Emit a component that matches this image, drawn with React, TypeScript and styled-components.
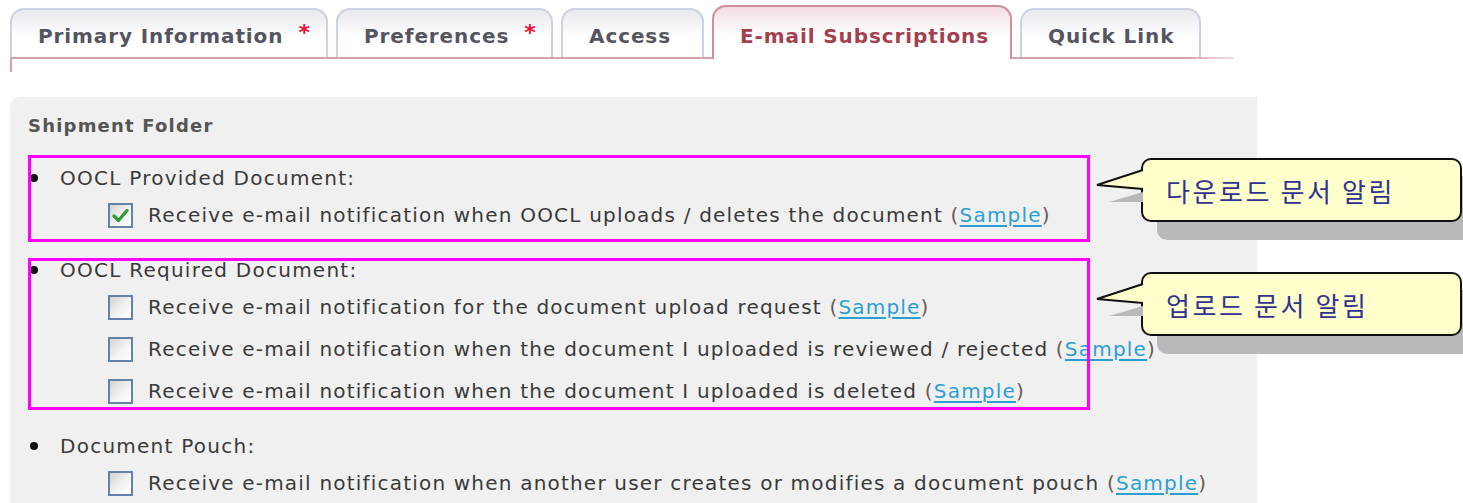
import styled, { createGlobalStyle } from 'styled-components';

interface TabItem {
  label: string;
  width: number;
  required?: boolean;
  active?: boolean;
}

interface RowItem {
  text: string;
  checked?: boolean;
}

interface GroupItem {
  title: string;
  rows: RowItem[];
}

const tabs: TabItem[] = [
  { label: 'Primary Information', width: 318, required: true },
  { label: 'Preferences', width: 217, required: true },
  { label: 'Access', width: 143 },
  { label: 'E-mail Subscriptions', width: 300, active: true },
  { label: 'Quick Link', width: 181 },
];

const groups: GroupItem[] = [
  {
    title: 'OOCL Provided Document:',
    rows: [
      {
        text: 'Receive e-mail notification when OOCL uploads / deletes the document',
        checked: true,
      },
    ],
  },
  {
    title: 'OOCL Required Document:',
    rows: [
      { text: 'Receive e-mail notification for the document upload request' },
      {
        text: 'Receive e-mail notification when the document I uploaded is reviewed / rejected',
      },
      { text: 'Receive e-mail notification when the document I uploaded is deleted' },
    ],
  },
  {
    title: 'Document Pouch:',
    rows: [
      {
        text: 'Receive e-mail notification when another user creates or modifies a document pouch',
      },
    ],
  },
];

const GlobalStyle = createGlobalStyle`
  html, body {
    margin: 0;
    padding: 0;
    background: #ffffff;
    overflow: hidden;
  }
`;

const Page = styled.div`
  position: relative;
  width: 1463px;
  height: 503px;
  padding: 5px 0 0 10px;
  box-sizing: border-box;
  font-family: 'DejaVu Sans', Verdana, sans-serif;
`;

const TabBar = styled.div`
  display: flex;
  align-items: flex-end;
  gap: 8px;
  width: 1224px;
  height: 52px;
  border-bottom: 2px solid;
  border-image: linear-gradient(to right, #d3a3aa 0%, #d3a3aa 96%, #f2e4e6 100%) 1;
`;

const Tab = styled.div<{ $active?: boolean; $width: number }>`
  position: relative;
  box-sizing: border-box;
  width: ${(p) => p.$width}px;
  height: ${(p) => (p.$active ? 54 : 49)}px;
  margin-bottom: ${(p) => (p.$active ? -2 : 0)}px;
  display: flex;
  align-items: center;
  padding: ${(p) => (p.$active ? 6 : 4)}px 0 0 26px;
  border: 2px solid ${(p) => (p.$active ? '#cf8f98' : '#cdd2e2')};
  border-bottom: ${(p) => (p.$active ? 'none' : '0')};
  border-radius: 14px 14px 0 0;
  background: ${(p) =>
    p.$active
      ? 'linear-gradient(to bottom, #f4dde1 0%, #ffffff 55%)'
      : 'linear-gradient(to bottom, #e9e9ee 0%, #ffffff 60%)'};
  color: ${(p) => (p.$active ? '#a3404f' : '#555562')};
  font-weight: bold;
  font-size: 20px;
  letter-spacing: 0.9px;
  white-space: nowrap;
`;

const Required = styled.span`
  color: #ee1133;
  font-size: 22px;
  margin-left: 15px;
  align-self: flex-start;
  margin-top: 8px;
  line-height: 1;
`;

const TabFrame = styled.div`
  width: 0;
  height: 13px;
  border-left: 2px solid #d3a3aa;
`;

const Panel = styled.div`
  position: relative;
  width: 1247px;
  height: 430px;
  margin-top: 25px;
  box-sizing: border-box;
  padding: 17px 0 0 18px;
  background: #f0f0f0;
  border-top-left-radius: 10px;
  color: #3a3a3a;
`;

const Heading = styled.div`
  height: 24px;
  line-height: 24px;
  font-size: 18px;
  font-weight: bold;
  letter-spacing: 1.2px;
  color: #555555;
`;

const GroupList = styled.ul`
  list-style: none;
  margin: 24px 0 0;
  padding: 0;
  display: flex;
  flex-direction: column;
  gap: 18px;
`;

const Group = styled.li`
  display: flex;
  flex-direction: column;
`;

const GroupTitle = styled.div`
  position: relative;
  height: 32px;
  line-height: 32px;
  padding-left: 32px;
  font-size: 20px;
  letter-spacing: 1.25px;

  &::before {
    content: '';
    position: absolute;
    left: 2px;
    top: 12px;
    width: 8px;
    height: 8px;
    border-radius: 50%;
    background: #111111;
  }
`;

const Row = styled.label`
  display: flex;
  align-items: center;
  gap: 15px;
  height: 42px;
  padding-left: 80px;
  font-size: 20px;
  letter-spacing: 1.2px;
  white-space: nowrap;
`;

const Box = styled.span`
  box-sizing: border-box;
  width: 25px;
  height: 25px;
  flex: none;
  display: flex;
  align-items: center;
  justify-content: center;
  border: 2px solid #6583a8;
  background: linear-gradient(135deg, #d4d4d4 0%, #f2f2f2 55%, #ffffff 100%);
`;

const SampleLink = styled.a`
  color: #2c9fd2;
  text-decoration: underline;
  text-underline-offset: 3px;
`;

const Paren = styled.span`
  color: #6b5a55;
`;

const Marker = styled.div<{ $top: number; $height: number }>`
  position: absolute;
  left: 18px;
  top: ${(p) => p.$top}px;
  width: 1062px;
  height: ${(p) => p.$height}px;
  box-sizing: border-box;
  border: 3px solid #ff00ff;
  pointer-events: none;
`;

const Callout = styled.div<{ $top: number }>`
  position: absolute;
  left: 1131px;
  top: ${(p) => p.$top}px;
  width: 321px;
  height: 64px;
  box-sizing: border-box;
  padding-left: 23px;
  display: flex;
  align-items: center;
  background: #ffffcc;
  border: 2px solid #111111;
  border-radius: 10px;
  box-shadow: 16px 18px 0 #b9b9b9;
  color: #30338f;
  font-family: 'Noto Sans CJK KR', 'Noto Sans', sans-serif;
  font-size: 26px;
  letter-spacing: 2.6px;
  z-index: 2;
`;

const Tail = styled.svg`
  position: absolute;
  left: -48px;
  top: 6px;
  overflow: visible;
`;

const CheckMark = () => (
  <svg width="17" height="15" viewBox="0 0 17 15">
    <path
      d="M2 8 L6.5 12.5 L15 2.5"
      fill="none"
      stroke="#2f9a36"
      strokeWidth="3.2"
      strokeLinecap="round"
      strokeLinejoin="round"
    />
  </svg>
);

// speech-bubble pointer plus its drop shadow, drawn left of the bubble
const BubbleTail = () => (
  <Tail width="52" height="40" viewBox="0 0 52 40">
    <polygon points="14,36 48,26 48,36" fill="#b9b9b9" />
    <polygon points="48,4 2,19 48,23 52,23 52,4" fill="#ffffcc" />
    <polyline
      points="48,4 2,19 48,23"
      fill="none"
      stroke="#111111"
      strokeWidth="2"
      strokeLinejoin="miter"
    />
  </Tail>
);

export default function App() {
  return (
    <>
      <GlobalStyle />
      <Page>
        <TabBar>
          {tabs.map((tab) => (
            <Tab key={tab.label} $active={tab.active} $width={tab.width}>
              {tab.label}
              {tab.required && <Required>*</Required>}
            </Tab>
          ))}
        </TabBar>
        <TabFrame />
        <Panel>
          <Heading>Shipment Folder</Heading>
          <GroupList>
            {groups.map((group) => (
              <Group key={group.title}>
                <GroupTitle>{group.title}</GroupTitle>
                {group.rows.map((row) => (
                  <Row key={row.text}>
                    <Box>{row.checked && <CheckMark />}</Box>
                    <span>
                      {row.text} <Paren>(</Paren>
                      <SampleLink href="#">Sample</SampleLink>
                      <Paren>)</Paren>
                    </span>
                  </Row>
                ))}
              </Group>
            ))}
          </GroupList>

          <Marker $top={58} $height={87} />
          <Marker $top={161} $height={152} />

          <Callout $top={61}>
            <BubbleTail />
            다운로드 문서 알림
          </Callout>
          <Callout $top={175}>
            <BubbleTail />
            업로드 문서 알림
          </Callout>
        </Panel>
      </Page>
    </>
  );
}
